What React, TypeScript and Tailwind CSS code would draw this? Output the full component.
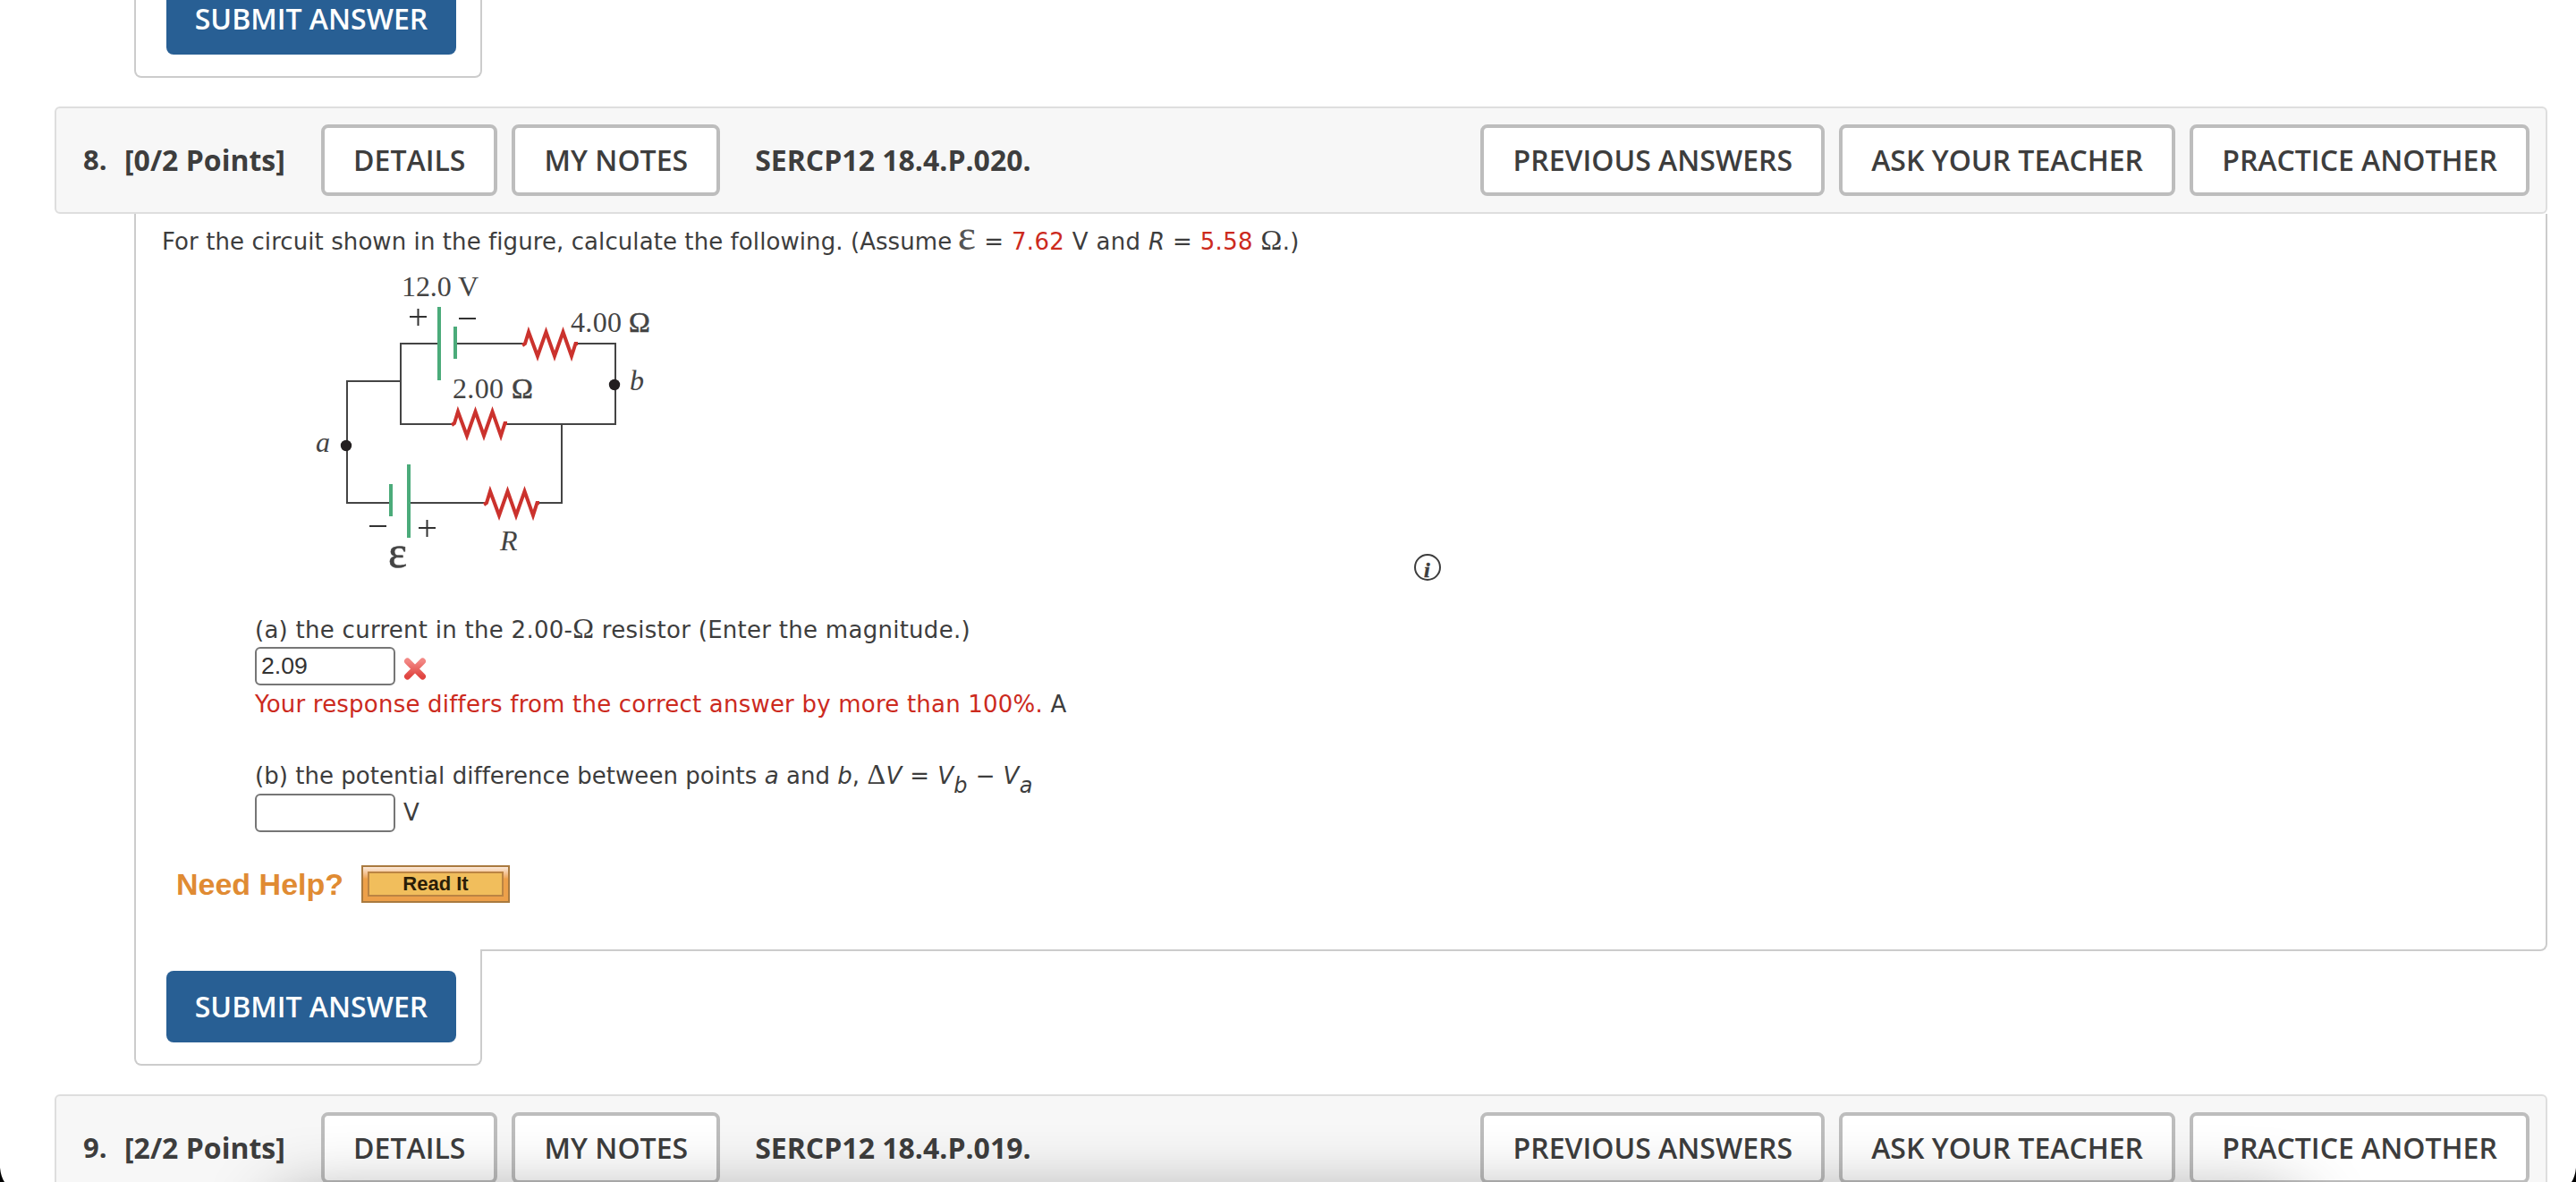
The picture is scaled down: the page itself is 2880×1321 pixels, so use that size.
import React from 'react';

interface BarProps {
  number: string;
  points: string;
  code: string;
}

interface ResistorProps {
  x: number;
  y: number;
}

const BarButton: React.FC<{ label: string }> = ({ label }) => (
  <button className="h-20 px-[32.1px] flex items-center justify-center rounded-lg border-4 border-[#bdbdbd] bg-white text-[32px] font-semibold whitespace-nowrap">
    {label}
  </button>
);

const QuestionBar: React.FC<BarProps> = ({ number, points, code }) => (
  <header className="ml-[61px] w-[2787px] h-[120px] shrink-0 flex items-center justify-between pl-[30px] pr-[18px] rounded-md border-2 border-[#dedede] bg-[#f7f7f7] font-['Open_Sans',sans-serif]">
    <div className="flex items-center">
      <span className="w-[46px] pb-0.5 text-[31px] font-bold">{number}</span>
      <span className="w-[220px] text-[32px] font-bold whitespace-nowrap">{points}</span>
      <div className="flex gap-4">
        <BarButton label="DETAILS" />
        <BarButton label="MY NOTES" />
      </div>
      <span className="ml-[39px] text-[32px] font-bold">{code}</span>
    </div>
    <div className="flex gap-4">
      <BarButton label="PREVIOUS ANSWERS" />
      <BarButton label="ASK YOUR TEACHER" />
      <BarButton label="PRACTICE ANOTHER" />
    </div>
  </header>
);

const SubmitTab: React.FC = () => (
  <div className="ml-[150px] w-[389px] h-[130px] -mt-0.5 shrink-0 pl-[34px] pt-6 rounded-b-lg border-2 border-t-0 border-[#ccc] bg-white font-['Open_Sans',sans-serif]">
    <button className="w-[324px] h-20 flex items-center justify-center rounded-lg bg-[#285f94] text-white text-[32px] font-semibold whitespace-nowrap">
      SUBMIT ANSWER
    </button>
  </div>
);

const Resistor: React.FC<ResistorProps> = ({ x, y }) => (
  <path
    transform={`translate(${x} ${y})`}
    d="M-1 2 L2 0 L6 -13 L16 14 L25.500 -13 L35 14 L44.500 -13 L54 14 L58.500 0 L61 0"
    fill="none"
    stroke="#cb322d"
    strokeWidth="4"
  />
);

// Two batteries and three resistors between points a and b
const Circuit: React.FC = () => (
  <svg width="440" height="360" viewBox="0 0 440 360" className="block font-['Liberation_Serif',serif]">
    <g fill="none" stroke="#444" strokeWidth="2">
      <path d="M160 94 H118 V184 H176 M236 184 H358 V94 H314 M180 94 H255" />
      <path d="M118 136 H58 V272 H106 M128 272 H212 M271 272 H298 V184" />
    </g>
    <path d="M161 53 V135 M179 75 V111 M107 251 V287 M127 229 V311" stroke="#4bab7a" strokeWidth="4" />
    <Resistor x={255} y={94} />
    <Resistor x={176} y={183} />
    <Resistor x={212} y={272} />
    <path
      d="M128 64 H147 M137.500 55 V74 M183 66 H202 M83 298 H102 M138 300 H157 M147.500 291 V310"
      stroke="#333"
      strokeWidth="2"
    />
    <circle cx="57" cy="208" r="6.200" fill="#231f20" />
    <circle cx="357" cy="140" r="6.200" fill="#231f20" />
    <g fill="#444" fontSize="32">
      <text x="119" y="41" textLength="86">12.0 V</text>
      <text x="308" y="81" textLength="57">4.00</text>
      <text x="373" y="81" stroke="#444" strokeWidth="0.600" textLength="25">Ω</text>
      <text x="176" y="155" textLength="57">2.00</text>
      <text x="242" y="155" stroke="#444" strokeWidth="0.600" textLength="25">Ω</text>
      <text x="23" y="215" fontStyle="italic">a</text>
      <text x="374" y="146" fontStyle="italic">b</text>
      <text x="229" y="325" fontStyle="italic">R</text>
      <text x="104" y="344" fontSize="50" stroke="#444" strokeWidth="0.600">ɛ</text>
    </g>
  </svg>
);

const CrossMark: React.FC = () => (
  <svg width="28" height="28" viewBox="0 0 28 28" className="mt-1.5">
    <defs>
      <linearGradient id="cross" x1="0" y1="0" x2="0" y2="1">
        <stop offset="0" stopColor="#f28683" />
        <stop offset="1" stopColor="#e04541" />
      </linearGradient>
    </defs>
    <path d="M5.500 5 L22.500 22 M22.500 5 L5.500 22" stroke="url(#cross)" strokeWidth="7" strokeLinecap="round" />
  </svg>
);

const InfoIcon: React.FC = () => (
  <svg width="30" height="30" viewBox="0 0 30 30" className="overflow-visible">
    <circle cx="15" cy="15" r="14" fill="none" stroke="#3d3d3d" strokeWidth="2" />
    <text
      x="11"
      y="26"
      fontSize="24"
      fontWeight="bold"
      fontStyle="italic"
      fill="#3d3d3d"
      stroke="#3d3d3d"
      strokeWidth="0.500"
      className="font-['Liberation_Serif',serif]"
    >
      i
    </text>
  </svg>
);

const Symbol: React.FC<{ children: string }> = ({ children }) => (
  <span className="font-['Liberation_Serif',serif] text-[32px] leading-none">{children}</span>
);

const Question: React.FC = () => (
  <section className="ml-[150px] w-[2698px] h-[824px] shrink-0 border-2 border-t-0 border-[#ccc] rounded-br-lg pl-[29px] pt-[11px] text-[26px] leading-[40px]">
    <p className="whitespace-nowrap h-[39px] tracking-[0.08px]">
      For the circuit shown in the figure, calculate the following. (Assume{' '}
      <span className="inline-block w-[21px] -ml-0.5 font-['Liberation_Serif',serif] text-[48px] leading-[20px] text-[#555]">ɛ</span>
      <span className="tracking-[0.33px]">
        {' '}= <span className="text-[#cc2a1e]">7.62</span> V and <i>R</i> ={' '}
        <span className="text-[#cc2a1e]">5.58</span> <Symbol>Ω</Symbol>.)
      </span>
    </p>
    <div className="flex items-start h-[361px] pt-px pl-[149px]">
      <Circuit />
      <div className="ml-[811px] mt-[329px]">
        <InfoIcon />
      </div>
    </div>
    <div className="pl-[104px] pt-[34px]">
      <p className="whitespace-nowrap tracking-[0.27px] h-[39px]">
        (a) the current in the 2.00-<Symbol>Ω</Symbol> resistor (Enter the magnitude.)
      </p>
      <div className="flex items-center gap-2 h-11">
        <div className="w-[157px] h-[43px] -mt-px pl-[5px] border-2 border-[#767676] rounded-md font-['Liberation_Sans',sans-serif] text-[26.67px] leading-[38px] text-[#333]">
          2.09
        </div>
        <CrossMark />
      </div>
      <p className="whitespace-nowrap text-[#cc2a1e] tracking-[0.21px]">
        Your response differs from the correct answer by more than 100%. <span className="text-[#3d3d3d]">A</span>
      </p>
      <p className="mt-10 h-10 whitespace-nowrap tracking-[0.04px]">
        (b) the potential difference between points <i>a</i> and <i>b</i>,{' '}
        <span className="tracking-[0.4px]">
          <Symbol>Δ</Symbol>
          <i>V</i> = <i>V</i>
          <i className="relative top-[10px] text-[24px]">b</i> − <i>V</i>
          <i className="relative top-[10px] text-[24px]">a</i>
        </span>
      </p>
      <div className="flex gap-[9px]">
        <div className="w-[157px] h-[43px] border-2 border-[#767676] rounded-md" />
        <span className="pt-px">V</span>
      </div>
    </div>
    <div className="flex items-center mt-[37px] pl-4 font-['Liberation_Sans',sans-serif] font-bold">
      <span className="w-[207px] text-[34px] text-[#e08b33]">Need Help?</span>
      <button className="w-[166px] h-[42px] p-[5px] border-2 border-[#a97a3f] bg-linear-to-b from-[#fbe9da] via-[#eda04a] via-35% to-[#eda04a] text-[#2a1d08]">
        <span className="h-full flex items-center justify-center border-2 border-[#bb8443] bg-[#f1be5c] text-[22px] leading-none">
          Read It
        </span>
      </button>
    </div>
  </section>
);

export default function App() {
  return (
    <div className="relative w-[2880px] h-[1321px] overflow-hidden flex flex-col bg-white text-[#3d3d3d] font-['DejaVu_Sans',sans-serif]">
      <div className="-mt-[41px] flex flex-col">
        <SubmitTab />
      </div>
      <div className="mt-8 flex flex-col">
        <QuestionBar number="8." points="[0/2 Points]" code="SERCP12 18.4.P.020." />
        <Question />
        <SubmitTab />
      </div>
      <div className="mt-8 flex flex-col">
        <QuestionBar number="9." points="[2/2 Points]" code="SERCP12 18.4.P.019." />
      </div>

      {/* dock shadow and the rounded window corners */}
      <div className="absolute left-[310px] top-[1345px] w-[2260px] h-24 rounded-3xl shadow-[0_0_80px_rgba(0,0,0,0.45)]" />
      <svg width="5" height="16" viewBox="0 0 5 16" className="absolute left-0 bottom-0">
        <path d="M0 0 Q1 10 5 16 H0 Z" fill="#000" />
      </svg>
      <svg width="5" height="16" viewBox="0 0 5 16" className="absolute right-0 bottom-0">
        <path d="M5 0 Q4 10 0 16 H5 Z" fill="#000" />
      </svg>
    </div>
  );
}
